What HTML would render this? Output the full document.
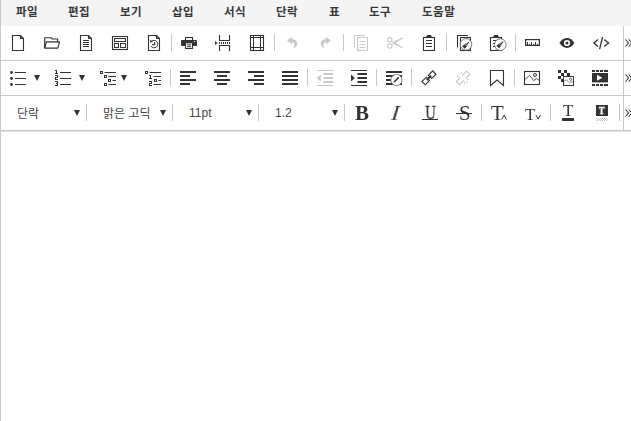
<!DOCTYPE html>
<html lang="ko">
<head>
<meta charset="utf-8">
<title>Editor</title>
<style>
html,body{margin:0;padding:0;background:#fff;}
body{width:631px;height:421px;overflow:hidden;position:relative;font-family:"Liberation Sans","Noto Sans CJK KR",sans-serif;color:#333;}
#wrap{position:absolute;left:0;top:0;width:631px;height:421px;overflow:hidden;}
#lb{position:absolute;left:0;top:0;width:1px;height:421px;background:#c9c9c9;}
#menubar{position:absolute;left:1px;top:0;width:630px;height:26px;background:#f4f4f4;}
.mi{position:absolute;top:0px;height:25px;line-height:24px;font-size:11.5px;letter-spacing:0.5px;font-weight:bold;color:#383838;white-space:nowrap;}
.hl{position:absolute;left:1px;width:630px;height:1px;background:#c9c9c9;}
.vl{position:absolute;left:623px;top:26px;width:1px;height:104px;background:#c9c9c9;}
.sep{position:absolute;width:1px;height:17px;background:#c6c6c6;}
.ic{position:absolute;overflow:visible;}
.dd{position:absolute;width:0;height:0;border-left:3.5px solid transparent;border-right:3.5px solid transparent;border-top:6px solid #333;}
.st{position:absolute;font-size:12px;line-height:16px;color:#444;white-space:nowrap;}
.tb{position:absolute;font-family:"Liberation Serif",serif;color:#333;white-space:nowrap;line-height:1;will-change:transform;}
.ln{position:absolute;height:1px;background:#333;}
.bar{position:absolute;}
.more{position:absolute;left:624px;font-family:"Noto Sans CJK KR",sans-serif;font-size:20px;line-height:20px;font-weight:300;color:#333;}
</style>
</head>
<body>
<div id="wrap">
<div id="lb"></div>
<div id="menubar">
<span class="mi" style="left:15px">파일</span>
<span class="mi" style="left:67px">편집</span>
<span class="mi" style="left:119px">보기</span>
<span class="mi" style="left:171px">삽입</span>
<span class="mi" style="left:223px">서식</span>
<span class="mi" style="left:275px">단락</span>
<span class="mi" style="left:328px">표</span>
<span class="mi" style="left:368px">도구</span>
<span class="mi" style="left:421px">도움말</span>
</div>
<div class="hl" style="top:60px"></div>
<div class="hl" style="top:95px"></div>
<div class="hl" style="top:130px"></div>
<div class="hl" style="top:131px;background:#e3e3e3"></div>
<div class="vl"></div>

<div id="row1">
<svg class="ic" style="left:10px;top:35px;width:16px;height:16px" viewBox="10 35 16 16" ><path fill="none" stroke="#333" stroke-width="1.1" d="M12.5 35.5H20.5L23.5 38.5V50.5H12.5Z"/><path fill="none" stroke="#333" stroke-width="1.3" d="M20.6 35.5V38.4H23.5"/></svg>
<svg class="ic" style="left:44px;top:35px;width:16px;height:16px" viewBox="44 35 16 16" ><path fill="none" stroke="#333" stroke-width="1.15" stroke-linejoin="round" d="M44.7 48V37.7H51.5L52 39H57.6V41.6"/><path fill="none" stroke="#333" stroke-width="1.15" stroke-linejoin="round" d="M44.7 48.1L46.3 41.9H59.5L57.8 48.1Z"/></svg>
<svg class="ic" style="left:78px;top:35px;width:16px;height:16px" viewBox="78 35 16 16" ><path fill="none" stroke="#333" stroke-width="1.1" d="M80.5 35.5H88.5L91.5 38.5V50.5H80.5Z"/><path fill="none" stroke="#333" stroke-width="1.3" d="M88.6 35.5V38.4H91.5"/><path fill="none" stroke="#333" stroke-width="1" d="M83 40.5H89M83 42.5H89M83 44.5H89M83 46.5H89"/></svg>
<svg class="ic" style="left:112px;top:35px;width:16px;height:16px" viewBox="112 35 16 16" ><rect fill="none" stroke="#333" stroke-width="1.1" x="112.5" y="36.5" width="15" height="13"/><rect fill="none" stroke="#333" stroke-width="1" x="114.5" y="38.5" width="11" height="3"/><rect fill="none" stroke="#333" stroke-width="1" x="114.5" y="43.5" width="4" height="4"/><rect fill="none" stroke="#333" stroke-width="1" x="120.5" y="43.5" width="5" height="4"/></svg>
<svg class="ic" style="left:146px;top:35px;width:16px;height:16px" viewBox="146 35 16 16" ><path fill="none" stroke="#333" stroke-width="1.1" d="M148.5 35.5H156.5L159.5 38.5V50.5H148.5Z"/><path fill="none" stroke="#333" stroke-width="1.3" d="M156.6 35.5V38.4H159.5"/><path fill="none" stroke="#333" stroke-width="1" d="M151.6 41.4A3.7 3.7 0 1 1 151.1 46.2"/><path fill="#333" d="M150 39.9L153.1 41.2L150.4 42.9Z"/><path fill="none" stroke="#333" stroke-width="1.1" d="M154.6 42V44.6H152.2"/></svg>
<div class="sep" style="left:171px;top:34px"></div>
<svg class="ic" style="left:181px;top:35px;width:16px;height:16px" viewBox="181 35 16 16" ><rect fill="none" stroke="#333" stroke-width="1.1" x="185.5" y="37.5" width="7" height="3"/><rect fill="#333" x="181" y="40" width="16" height="6" rx="0.8"/><rect fill="#fff"  stroke="#333" stroke-width="1.1" x="185.5" y="42.8" width="7" height="5.7"/><path fill="none" stroke="#333" stroke-width="1" d="M187 44.9H191M187 46.7H191"/><circle fill="#fff" cx="194.6" cy="41.6" r="0.7"/></svg>
<svg class="ic" style="left:215px;top:35px;width:16px;height:16px" viewBox="215 35 16 16" ><path fill="none" stroke="#333" stroke-width="1.1" d="M219.5 35V40.5H229.5V35M219.5 51V45.5H229.5V51"/><path fill="#333" d="M219 42h1v2h-1zM221 42h1v2h-1zM223 42h1v2h-1zM225 42h1v2h-1zM227 42h1v2h-1zM229 42h1v2h-1z"/><path fill="#333" d="M215 41L217.5 43L215 45Z"/></svg>
<svg class="ic" style="left:249px;top:35px;width:16px;height:16px" viewBox="249 35 16 16" ><rect fill="none" stroke="#333" stroke-width="1.1" x="250.5" y="35.5" width="13" height="15"/><path fill="none" stroke="#333" stroke-width="1" d="M253.5 35.5V50.5M260.5 35.5V50.5M250.5 37.5H263.5M250.5 47.5H263.5"/></svg>
<div class="sep" style="left:274px;top:34px"></div>
<svg class="ic" style="left:284px;top:35px;width:16px;height:16px" viewBox="284 35 16 16" ><path fill="#c9c9c9" d="M287 40.5L292 36.8V39.2C295.3 39.2 297.3 41.3 297.3 43.6C297.3 46 295.3 48 292.2 49C293.8 47.6 294.7 46.2 294.5 44.7C294.3 43 293.3 42 292 42V44.2Z"/></svg>
<svg class="ic" style="left:318px;top:35px;width:16px;height:16px" viewBox="318 35 16 16" ><g transform="translate(618 0) scale(-1 1)"><path fill="#c9c9c9" d="M287 40.5L292 36.8V39.2C295.3 39.2 297.3 41.3 297.3 43.6C297.3 46 295.3 48 292.2 49C293.8 47.6 294.7 46.2 294.5 44.7C294.3 43 293.3 42 292 42V44.2Z"/></g></svg>
<div class="sep" style="left:343px;top:34px"></div>
<svg class="ic" style="left:353px;top:35px;width:16px;height:16px" viewBox="353 35 16 16" ><path fill="none" stroke="#c9c9c9" stroke-width="1.1" d="M354.5 47.5V35.5H365"/><rect fill="none" stroke="#c9c9c9" stroke-width="1.1" x="357.5" y="37.5" width="10" height="13"/><path fill="none" stroke="#c9c9c9" stroke-width="1" d="M359.5 41.5H365.5M359.5 44.5H365.5M359.5 47.5H365.5"/></svg>
<svg class="ic" style="left:387px;top:35px;width:16px;height:16px" viewBox="387 35 16 16" ><circle fill="none" stroke="#c9c9c9" stroke-width="1.1" cx="389.8" cy="39.8" r="2.2"/><circle fill="none" stroke="#c9c9c9" stroke-width="1.1" cx="389.8" cy="46" r="2.2"/><path fill="none" stroke="#c9c9c9" stroke-width="1" d="M391.6 41.2L402.6 47.8M391.6 44.6L402.6 37.8"/><path fill="#c9c9c9" d="M394 42L402.9 47.5L402.5 48.2L393.6 44.1ZM394 43.8L402.9 38.2L402.5 37.5L393.6 41.8Z"/></svg>
<svg class="ic" style="left:421px;top:35px;width:16px;height:16px" viewBox="421 35 16 16" ><rect fill="none" stroke="#333" stroke-width="1.1" x="423.5" y="37.5" width="11" height="13"/><path fill="#333" d="M425.8 37.4L427.2 35H430.8L432.2 37.4Z"/><path fill="none" stroke="#333" stroke-width="1" d="M426 40.5H432M426 43.5H432M426 46.5H432"/></svg>
<div class="sep" style="left:446px;top:34px"></div>
<svg class="ic" style="left:456px;top:35px;width:17px;height:16px" viewBox="456 35 17 16" ><path fill="none" stroke="#333" stroke-width="1.1" d="M457.5 47.5V35.5H468"/><rect fill="none" stroke="#333" stroke-width="1.1" x="460.5" y="37.5" width="10" height="13"/><circle fill="#fff" stroke="#555" stroke-width="0.8" cx="466" cy="44.4" r="5.8"/><g transform="rotate(45 466.1 44.9)"><rect fill="#333" x="465.55" y="41.0" width="1.1" height="3.4"/><rect fill="#333" x="464.70000000000005" y="44.1" width="2.8" height="1.1"/><path fill="#333" d="M464.5 45.6H467.70000000000005L468.0 48.6H464.20000000000005Z"/></g></svg>
<svg class="ic" style="left:489px;top:34px;width:18px;height:17px" viewBox="489 34 18 17" ><rect fill="none" stroke="#333" stroke-width="1.1" x="490.5" y="37.5" width="11" height="13"/><path fill="#333" d="M492.8 37.4L494.2 35H497.8L499.2 37.4Z"/><path fill="none" stroke="#333" stroke-width="1" d="M493 40.5H496M493 43.5H495M493 46.5H495"/><circle fill="#fff" stroke="#555" stroke-width="0.8" cx="500.3" cy="44.6" r="5.8"/><g transform="rotate(45 500.4 44.4)"><rect fill="#333" x="499.84999999999997" y="40.5" width="1.1" height="3.4"/><rect fill="#333" x="499.0" y="43.6" width="2.8" height="1.1"/><path fill="#333" d="M498.79999999999995 45.1H502.0L502.29999999999995 48.1H498.5Z"/></g></svg>
<div class="sep" style="left:515px;top:34px"></div>
<svg class="ic" style="left:525px;top:35px;width:16px;height:16px" viewBox="525 35 16 16" ><rect fill="none" stroke="#333" stroke-width="1.2" x="525.6" y="39.6" width="13.8" height="5.8"/><path fill="none" stroke="#333" stroke-width="1" d="M527.5 45V42M531.5 45V42M535.5 45V42M529.5 45V43.9M533.5 45V43.9M537.5 45V43.9"/></svg>
<svg class="ic" style="left:559px;top:35px;width:16px;height:16px" viewBox="559 35 16 16" ><path fill="#333" d="M559.4 43C561.5 39.8 564.2 38 567 38C569.8 38 572.5 39.8 574.4 43C572.5 46.2 569.8 47.9 567 47.9C564.2 47.9 561.5 46.2 559.4 43Z"/><circle fill="#fff" cx="567" cy="43" r="3.1"/><circle fill="#333" cx="567" cy="43" r="1.5"/></svg>
<svg class="ic" style="left:593px;top:35px;width:17px;height:16px" viewBox="593 35 17 16" ><path fill="none" stroke="#333" stroke-width="1.3" d="M598 39.5L593.8 43L598 46.5M604.2 39.5L608.6 43L604.2 46.5M602.6 37L599.6 49.2"/></svg>
</div>
<div id="row2">
<svg class="ic" style="left:10px;top:70px;width:16px;height:16px" viewBox="10 70 16 16" ><circle fill="#333" cx="11.5" cy="72.5" r="1.4"/><circle fill="#333" cx="11.5" cy="78.5" r="1.4"/><circle fill="#333" cx="11.5" cy="84.5" r="1.4"/><path fill="none" stroke="#333" stroke-width="1" d="M15 72.5H26M15 78.5H26M15 84.5H26"/></svg>
<div class="dd" style="left:33.5px;top:75px"></div>
<svg class="ic" style="left:55px;top:70px;width:16px;height:16px" viewBox="55 70 16 16" ><rect fill="#333" x="55" y="70" width="2" height="1"/><rect fill="#333" x="56" y="70" width="1" height="4"/><rect fill="#333" x="55" y="73" width="3" height="1"/><rect fill="#333" x="55" y="75" width="3" height="1.0"/><rect fill="#333" x="57" y="75" width="1" height="3.0"/><rect fill="#333" x="55" y="77.0" width="3" height="1.0"/><rect fill="#333" x="55" y="77.0" width="1" height="3.0"/><rect fill="#333" x="55" y="79.0" width="3" height="1.0"/><rect fill="#333" x="55" y="81" width="3" height="1.0"/><rect fill="#333" x="57" y="81" width="1" height="5.0"/><rect fill="#333" x="56" y="83.0" width="2" height="1.0"/><rect fill="#333" x="55" y="85.0" width="3" height="1.0"/><path fill="none" stroke="#333" stroke-width="1" d="M60 72.5H71M60 78.5H71M60 84.5H71"/></svg>
<div class="dd" style="left:78.5px;top:75px"></div>
<svg class="ic" style="left:100px;top:70px;width:16px;height:16px" viewBox="100 70 16 16" ><rect fill="none" stroke="#333" stroke-width="1" x="100.5" y="71.5" width="2" height="2"/><rect fill="none" stroke="#333" stroke-width="1" x="104.5" y="75.5" width="2" height="2"/><rect fill="none" stroke="#333" stroke-width="1" x="108.5" y="79.5" width="2" height="2"/><rect fill="none" stroke="#333" stroke-width="1" x="104.5" y="83.5" width="2" height="2"/><path fill="none" stroke="#333" stroke-width="1" d="M104.5 72.5H116M108.5 76.5H116M112.5 80.5H116M108.5 84.5H116"/></svg>
<div class="dd" style="left:120.5px;top:75px"></div>
<svg class="ic" style="left:145px;top:70px;width:16px;height:16px" viewBox="145 70 16 16" ><rect fill="none" stroke="#333" stroke-width="1" x="145.5" y="71.5" width="2" height="2"/><rect fill="none" stroke="#333" stroke-width="1" x="154.5" y="79.5" width="2" height="2"/><rect fill="#333" x="149" y="75" width="2" height="1"/><rect fill="#333" x="150" y="75" width="1" height="4"/><rect fill="#333" x="149" y="78" width="3" height="1"/><rect fill="#333" x="149" y="81" width="3" height="1.0"/><rect fill="#333" x="151" y="81" width="1" height="3.0"/><rect fill="#333" x="149" y="83.0" width="3" height="1.0"/><rect fill="#333" x="149" y="83.0" width="1" height="3.0"/><rect fill="#333" x="149" y="85.0" width="3" height="1.0"/><path fill="none" stroke="#333" stroke-width="1" d="M149.5 72.5H161M153.5 76.5H161M158.5 80.5H161M153.5 84.5H161"/></svg>
<div class="sep" style="left:170px;top:69px"></div>
<svg class="ic" style="left:180px;top:70px;width:16px;height:16px" viewBox="180 70 16 16" ><rect fill="#333" x="180" y="71" width="16" height="2"/><rect fill="#333" x="180" y="75" width="10" height="2"/><rect fill="#333" x="180" y="79" width="16" height="2"/><rect fill="#333" x="180" y="83" width="10" height="2"/></svg>
<svg class="ic" style="left:214px;top:70px;width:16px;height:16px" viewBox="214 70 16 16" ><rect fill="#333" x="214" y="71" width="16" height="2"/><rect fill="#333" x="217" y="75" width="10" height="2"/><rect fill="#333" x="214" y="79" width="16" height="2"/><rect fill="#333" x="217" y="83" width="10" height="2"/></svg>
<svg class="ic" style="left:248px;top:70px;width:16px;height:16px" viewBox="248 70 16 16" ><rect fill="#333" x="248" y="71" width="16" height="2"/><rect fill="#333" x="254" y="75" width="10" height="2"/><rect fill="#333" x="248" y="79" width="16" height="2"/><rect fill="#333" x="254" y="83" width="10" height="2"/></svg>
<svg class="ic" style="left:282px;top:70px;width:16px;height:16px" viewBox="282 70 16 16" ><rect fill="#333" x="282" y="71" width="16" height="2"/><rect fill="#333" x="282" y="75" width="16" height="2"/><rect fill="#333" x="282" y="79" width="16" height="2"/><rect fill="#333" x="282" y="83" width="16" height="2"/></svg>
<div class="sep" style="left:307px;top:69px"></div>
<svg class="ic" style="left:317px;top:70px;width:16px;height:16px" viewBox="317 70 16 16" ><path fill="none" stroke="#c9c9c9" stroke-width="1" d="M317 70.5H333M317 85.5H333"/><path fill="#c9c9c9" d="M323.5 73h9.5v2h-9.5zM323.5 77h9.5v2h-9.5zM323.5 81h9.5v2h-9.5z"/><path fill="#c9c9c9" d="M320.7 74.5V81.5L316.8 78Z"/></svg>
<svg class="ic" style="left:351px;top:70px;width:16px;height:16px" viewBox="351 70 16 16" ><path fill="none" stroke="#333" stroke-width="1" d="M351 70.5H367M351 85.5H367"/><path fill="#333" d="M357.5 73h9.5v2h-9.5zM357.5 77h9.5v2h-9.5zM357.5 81h9.5v2h-9.5z"/><path fill="#333" d="M351 74.5V81.5L354.8 78Z"/></svg>
<div class="sep" style="left:376px;top:69px"></div>
<svg class="ic" style="left:386px;top:70px;width:16px;height:16px" viewBox="386 70 16 16" ><path fill="#333" d="M386 71h16v2h-16zM386 75h16v2h-16zM386 79h16v2h-16zM386 83h16v2h-16z"/><circle fill="#fff" stroke="#666" stroke-width="0.8" cx="396.4" cy="80" r="5.6"/><path fill="#333" d="M393.2 82.7L394 81L398.2 76.8L399.3 77.9L395.1 82.1Z"/></svg>
<div class="sep" style="left:411px;top:69px"></div>
<svg class="ic" style="left:421px;top:70px;width:16px;height:16px" viewBox="421 70 16 16" ><g transform="rotate(-44.5 428.95 77.85)" fill="none" stroke="#333" stroke-width="1.15"><rect x="421.4" y="75.55" width="6.05" height="4.6"/><rect x="430.45" y="75.55" width="6.05" height="4.6"/><path stroke-width="1.9" d="M425.84999999999997 77.85H432.05"/></g></svg>
<svg class="ic" style="left:455px;top:70px;width:16px;height:16px" viewBox="455 70 16 16" ><g transform="rotate(-45 463.0 77.95)" fill="none" stroke="#c9c9c9" stroke-width="1.15"><path d="M461.7 75.65H455.7V80.25H461.7M464.3 75.65H470.3V80.25H464.3"/></g><path fill="none" stroke="#c9c9c9" stroke-width="1" d="M457.1 76.4H459.1M458 72.9L459.7 74.7M461.5 72V74M467.1 79.5H469.2M466.2 81.1L468 82.8M464.5 82V84"/></svg>
<svg class="ic" style="left:490px;top:70px;width:16px;height:16px" viewBox="490 70 16 16" ><path fill="none" stroke="#333" stroke-width="1.1" d="M490.5 85.5V70.5H503.5V85.5L497 80Z"/></svg>
<div class="sep" style="left:514px;top:69px"></div>
<svg class="ic" style="left:524px;top:70px;width:16px;height:16px" viewBox="524 70 16 16" ><rect fill="none" stroke="#333" stroke-width="1.1" x="524.5" y="71.5" width="15" height="13"/><path fill="none" stroke="#4a4242" stroke-width="0.9" d="M524.5 79.8L529.6 75.4L533.6 80.6L536.6 78.6L539.5 80.6"/><circle fill="none" stroke="#333" stroke-width="1" cx="535" cy="75" r="1.5"/></svg>
<svg class="ic" style="left:558px;top:70px;width:16px;height:16px" viewBox="558 70 16 16" ><rect fill="#333" x="558" y="70" width="3" height="3"/><rect fill="#333" x="564" y="70" width="3" height="3"/><rect fill="#333" x="561" y="73" width="3" height="3"/><rect fill="#333" x="567" y="73" width="3" height="3"/><rect fill="#333" x="558" y="76" width="3" height="3"/><rect fill="#333" x="561" y="79" width="3" height="3"/><rect fill="#fff" stroke="#333" stroke-width="1" x="563.5" y="76.5" width="10" height="9"/><path fill="none" stroke="#555" stroke-width="0.7" d="M563.5 81.5L566.3 79.9L569.4 82.7L571.6 81.7L573.5 82.5"/><circle fill="none" stroke="#444" stroke-width="0.8" cx="570.6" cy="79.3" r="1.1"/></svg>
<svg class="ic" style="left:592px;top:70px;width:16px;height:16px" viewBox="592 70 16 16" ><rect fill="#333" x="592" y="70" width="3" height="2"/><rect fill="#333" x="596" y="70" width="3" height="2"/><rect fill="#333" x="600" y="70" width="3" height="2"/><rect fill="#333" x="604" y="70" width="4" height="2"/><rect fill="#333" x="592" y="84" width="3" height="2"/><rect fill="#333" x="596" y="84" width="3" height="2"/><rect fill="#333" x="600" y="84" width="3" height="2"/><rect fill="#333" x="604" y="84" width="4" height="2"/><rect fill="#333" x="592" y="73" width="16" height="9.4"/><path fill="#fff" d="M597 74.8V80.8L602.4 77.8Z"/></svg>
</div>
<div id="row3">
<span class="st" style="left:17px;top:106px">단락</span>
<div class="dd" style="left:73.5px;top:110px"></div>
<div class="sep" style="left:86px;top:104px"></div>
<span class="st" style="left:103px;top:106px">맑은 고딕</span>
<div class="dd" style="left:159.5px;top:110px"></div>
<div class="sep" style="left:172px;top:104px"></div>
<span class="st" style="left:189px;top:105px">11pt</span>
<div class="dd" style="left:245.5px;top:110px"></div>
<div class="sep" style="left:258px;top:104px"></div>
<span class="st" style="left:275px;top:105px">1.2</span>
<div class="dd" style="left:331.5px;top:110px"></div>
<div class="sep" style="left:344px;top:104px"></div>
<span class="tb" id="tB" style="left:355px;top:103px;font-size:21px;font-weight:bold">B</span>
<span class="tb" id="tI" style="left:392.3px;top:103px;font-size:21px;font-style:italic;transform:skewX(-7deg) scaleX(1.1)">I</span>
<span class="tb" id="tU" style="left:423.5px;top:103.5px;font-size:18px;transform:scaleX(.82);-webkit-text-stroke:0.3px #333">U</span><div class="ln" style="left:422px;top:119px;width:16px"></div>
<span class="tb" id="tS" style="left:458.5px;top:103px;font-size:21px">S</span><div class="ln" style="left:456px;top:113px;width:16px"></div>
<div class="sep" style="left:481px;top:104px"></div>
<span class="tb" id="tT1" style="left:491px;top:103px;font-size:21px">T</span><svg class="ic" style="left:501px;top:114px;width:7px;height:7px" viewBox="501 114 7 7" ><path fill="none" stroke="#333" stroke-width="1" d="M501.7 119.6L504.1 115.1L506.5 119.6"/></svg>
<span class="tb" id="tT2" style="left:525px;top:106px;font-size:17px">T</span><svg class="ic" style="left:535px;top:114px;width:7px;height:7px" viewBox="535 114 7 7" ><path fill="none" stroke="#333" stroke-width="1" d="M535.9 115L538.2 119L540.5 114.8"/></svg>
<div class="sep" style="left:550px;top:104px"></div>
<span class="tb" id="tT3" style="left:563px;top:102px;font-size:17px">T</span><div class="bar" style="left:562px;top:118px;width:12px;height:3px;background:#333"></div>
<div class="bar" style="left:596px;top:105px;width:12px;height:11px;background:#333"></div><span class="tb" id="tT4" style="left:597.9px;top:104.8px;font-size:11px;font-weight:bold;color:#fff;transform:scaleX(.8);-webkit-text-stroke:0.35px #fff">T</span><svg class="ic" style="left:596px;top:118px;width:12px;height:3px" viewBox="596 118 12 3" ><path fill="#c4c4c4" d="M596 118h1v1h-1zM598 118h1v1h-1zM600 118h1v1h-1zM602 118h1v1h-1zM604 118h1v1h-1zM606 118h1v1h-1zM597 119h1v1h-1zM599 119h1v1h-1zM601 119h1v1h-1zM603 119h1v1h-1zM605 119h1v1h-1zM607 119h1v1h-1zM596 120h1v1h-1zM598 120h1v1h-1zM600 120h1v1h-1zM602 120h1v1h-1zM604 120h1v1h-1zM606 120h1v1h-1z"/></svg>
<div class="sep" style="left:619px;top:104px"></div>
</div>
<span class="more" style="top:31px">»</span>
<span class="more" style="top:66px">»</span>
<span class="more" style="top:101px">»</span>
</div>
</body>
</html>
